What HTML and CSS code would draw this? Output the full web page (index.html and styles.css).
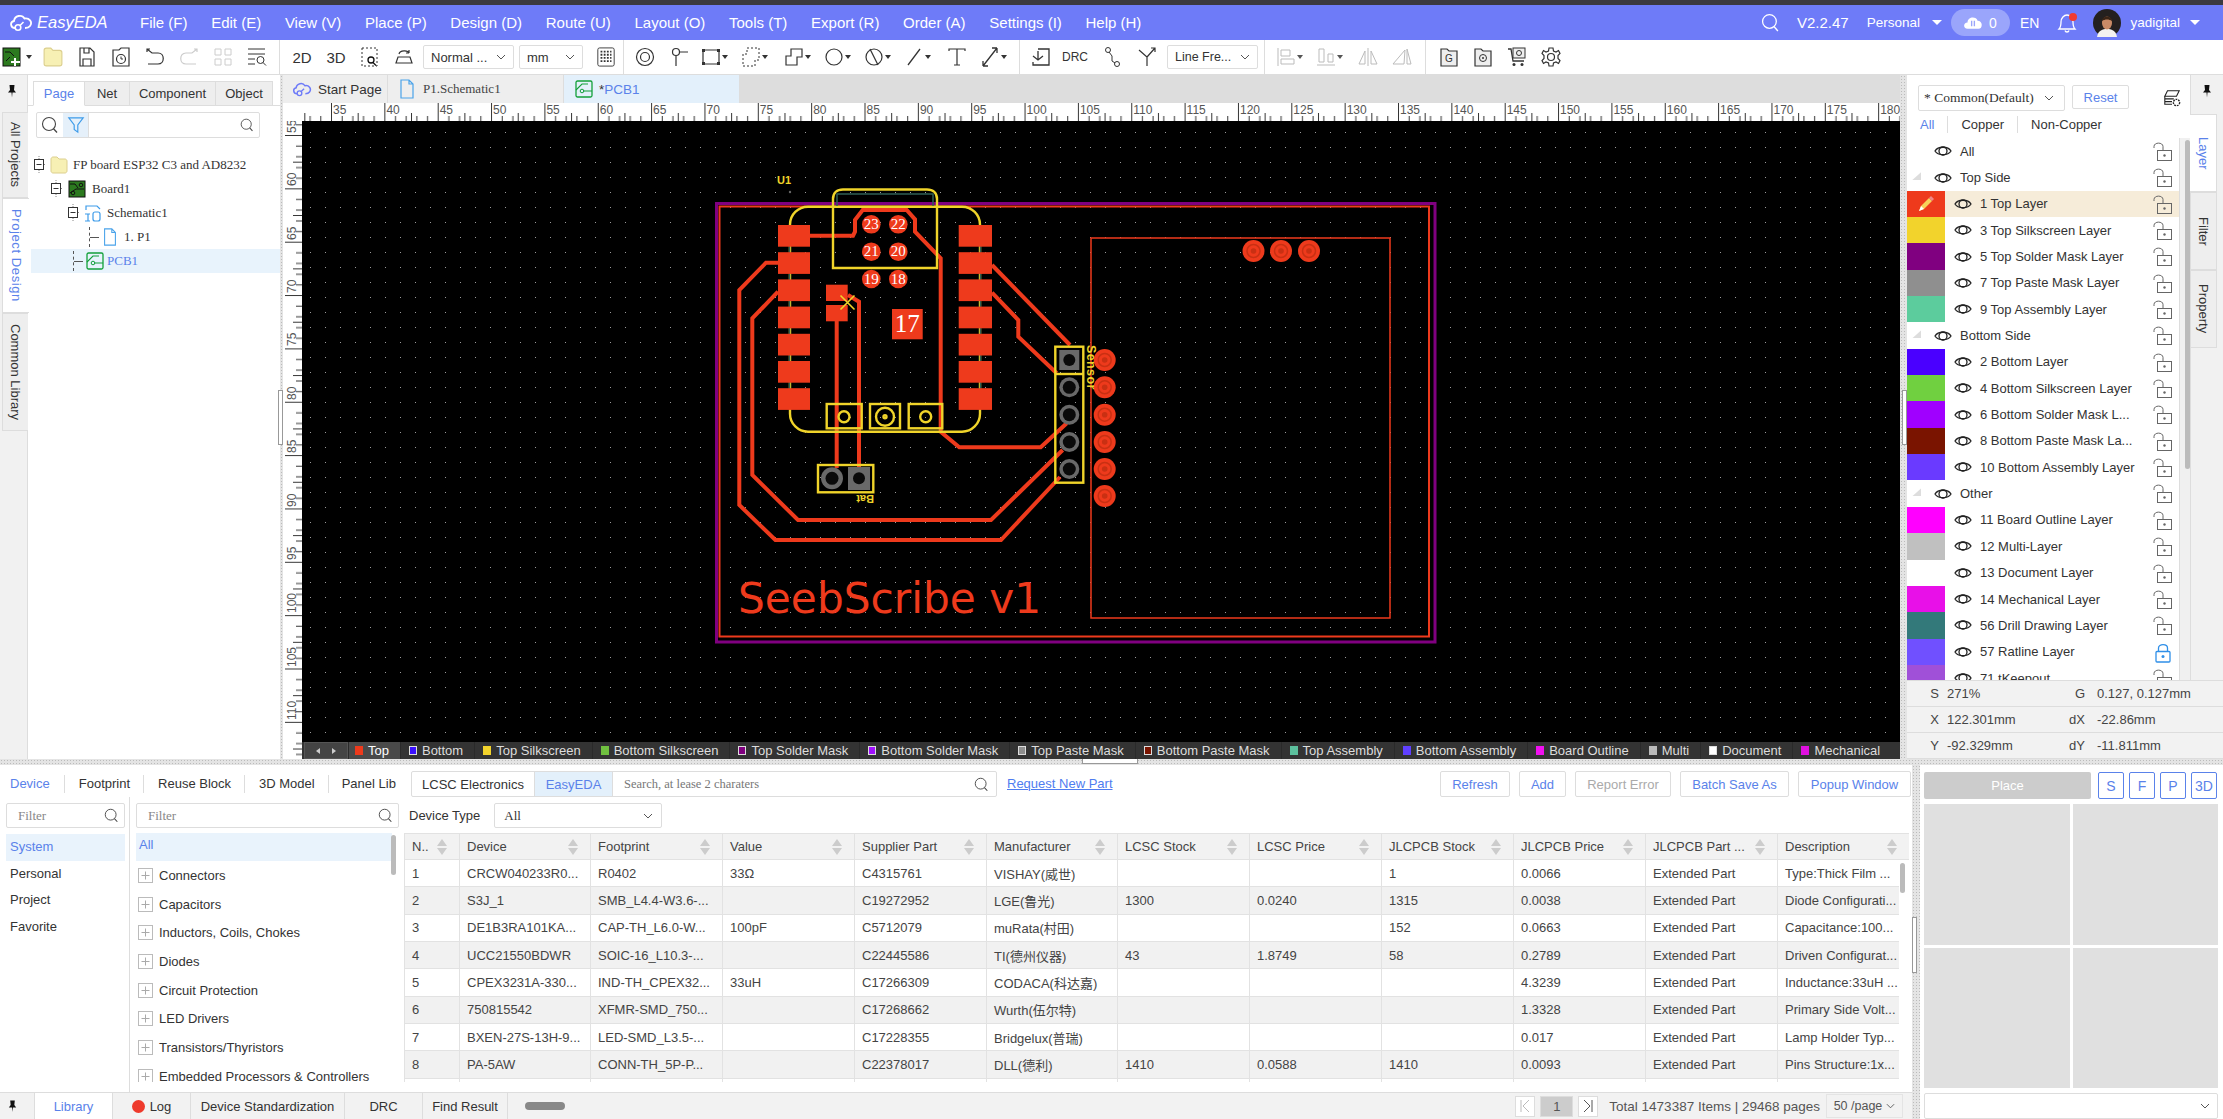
FILE: index.html
```html
<!DOCTYPE html>
<html lang="en">

<head>
    <meta charset="UTF-8" />
    <title>EasyEDA</title>
    <link rel="stylesheet" href="styles.css">
</head>

<body>

    <svg class="defs">
        <symbol id="eye" viewBox="0 0 18 14">
            <path d="M1 7C4 2 14 2 17 7C14 12 4 12 1 7Z" fill="none" stroke="#222" stroke-width="1.3" />
            <circle cx="9" cy="7" r="4" fill="none" stroke="#222" stroke-width="1.3" />
        </symbol>
        <symbol id="lock" viewBox="0 0 20 22">
            <rect x="4.5" y="9.5" width="14" height="10" fill="none" stroke="#666" />
            <path d="M1 7V5.5C1 1 10 1 10 5.5V9" fill="none" stroke="#666" />
            <circle cx="11.5" cy="14.5" r="1.2" fill="#666" />
        </symbol>
        <symbol id="lock-on" viewBox="0 0 20 22">
            <rect x="3" y="9.5" width="14" height="10.5" rx="1" fill="none" stroke="#2f8fe8" stroke-width="1.3" />
            <path d="M5.5 9V6C5.5 1.5 14.5 1.5 14.5 6V9" fill="none" stroke="#2f8fe8" stroke-width="1.3" />
            <circle cx="10" cy="14.5" r="1.5" fill="#2f8fe8" />
        </symbol>
        <symbol id="pin" viewBox="0 0 12 14">
            <path d="M3.5 1H8.5L8 6L10 8.500H2L4 6ZM5.500 8.500H6.500L6 13.500Z" fill="#111" />
        </symbol>
        <symbol id="mag" viewBox="0 0 18 18">
            <circle cx="8" cy="8" r="6.500" fill="none" stroke="#444" stroke-width="1.100" />
            <path d="M12.500 12.800L16 16.500" stroke="#444" stroke-width="1.300" />
        </symbol>
        <symbol id="chev" viewBox="0 0 10 6">
            <path d="M1 1L5 5L9 1" fill="none" stroke="#555" />
        </symbol>
        <symbol id="cloud" viewBox="0 0 24 20">
            <path d="M6 15C1.500 15 0.500 9 5 8C5.500 2.500 13 1 15.500 5.500C20 4.500 24 9 21 13C20 14.500 18 15 16 15" fill="none" stroke="currentColor" stroke-width="1.800" />
            <circle cx="9" cy="14.500" r="2.800" fill="none" stroke="currentColor" stroke-width="1.600" />
            <path d="M11 12.500L14.500 9" stroke="currentColor" stroke-width="1.600" />
        </symbol>
        <symbol id="pcb" viewBox="0 0 18 18">
            <rect x="1" y="1" width="16" height="16" rx="1.500" fill="none" stroke="#13a03a" stroke-width="1.300" />
            <path d="M1 10L7 4H13M8 11H17" fill="none" stroke="#13a03a" stroke-width="1.100" />
            <circle cx="7" cy="11" r="1.800" fill="none" stroke="#13a03a" />
        </symbol>
        <symbol id="sheet" viewBox="0 0 14 20">
            <path d="M1 1H9L13 5V19H1ZM9 1V5H13" fill="none" stroke="#4aa3ea" stroke-width="1.200" />
        </symbol>
        <symbol id="folder" viewBox="0 0 18 18">
            <path d="M1 3C1 2 2 1 3 1H7L9 3H15C16 3 17 4 17 5V15C17 16 16 17 15 17H3C2 17 1 16 1 15Z" fill="#f7f0b4" stroke="#dccf8e" />
        </symbol>
        <symbol id="box-minus" viewBox="0 0 12 18">
            <path d="M6 0V3M6 14V18M11 8.500H12" stroke="#888" stroke-dasharray="1 1" />
            <rect x="1.500" y="3.500" width="9" height="10" fill="#fff" stroke="#333" />
            <path d="M3.500 8.500H8.500" stroke="#333" />
        </symbol>
        <symbol id="plus" viewBox="0 0 15 15">
            <rect x="0.500" y="0.500" width="14" height="14" fill="#fff" stroke="#bbb" />
            <path d="M7.500 3.500V11.500M3.500 7.500H11.500" stroke="#aaa" />
        </symbol>
        <symbol id="sort" viewBox="0 0 12 18">
            <path d="M6 1L11 8H1ZM6 17L1 10H11Z" fill="#ccc" />
        </symbol>
    </svg>

    <div class="strip"></div>

    <header class="topbar">
        <div class="logo">
            <svg class="logo-ico"><use href="#cloud" /></svg>
            <span>EasyEDA</span>
        </div>
        <nav class="menu">
            <span>File (F)</span>
            <span>Edit (E)</span>
            <span>View (V)</span>
            <span>Place (P)</span>
            <span>Design (D)</span>
            <span>Route (U)</span>
            <span>Layout (O)</span>
            <span>Tools (T)</span>
            <span>Export (R)</span>
            <span>Order (A)</span>
            <span>Settings (I)</span>
            <span>Help (H)</span>
        </nav>
        <div class="top-right">
            <svg class="top-search" viewBox="0 0 18 18">
                <circle cx="8" cy="8" r="6.500" fill="none" stroke="#fff" stroke-width="1.200" />
                <path d="M12.500 13L16 17" stroke="#fff" stroke-width="1.300" />
            </svg>
            <span class="version">V2.2.47</span>
            <span class="plan">Personal</span>
            <i class="caret-w plan-caret"></i>
            <div class="cloud-pill">
                <svg viewBox="0 0 22 16">
                    <path d="M5 15C0 15 0 8 5 8C5 1 15 1 16 6C22 6 22 15 17 15Z" fill="#fff" />
                    <path d="M9.500 6V12M12.500 6V12" stroke="#9aa5fb" stroke-width="1.500" />
                </svg>
                <span>0</span>
            </div>
            <span class="lang">EN</span>
            <div class="bell">
                <svg viewBox="0 0 20 22">
                    <path d="M2 17C4 15 4 13 4 10C4 6 7 3 10 3C13 3 16 6 16 10C16 13 16 15 18 17ZM8 18.500C8.500 20.500 11.500 20.500 12 18.500" fill="none" stroke="#fff" stroke-width="1.300" />
                </svg>
                <b></b>
            </div>
            <svg class="avatar" viewBox="0 0 28 28">
                <circle cx="14" cy="14" r="14" fill="#24201f" />
                <path d="M4 28C5 21 10 20 14 20C18 20 23 21 24 28Z" fill="#f4f2f0" />
                <ellipse cx="14" cy="14" rx="5" ry="6.500" fill="#c98a66" />
                <path d="M9 12C9 6 19 6 19 12C16 10 12 10 9 12Z" fill="#3a2416" />
            </svg>
            <span class="user">yadigital</span>
            <i class="caret-w user-caret"></i>
        </div>
    </header>

    <div class="toolbar">
        <div class="tb-c first">
            <svg viewBox="0 0 20 20"><rect x="1" y="1" width="17" height="18" fill="#2c7a1f" stroke="#111" /><path d="M3 5H8L12 9M4 14L8 10" stroke="#111" fill="none" /><path d="M13 11V19M9 15H18" stroke="#fff" stroke-width="2" /></svg>
            <i class="caret"></i>
        </div>
        <div class="tb"><svg viewBox="0 0 20 20"><use href="#folder" /></svg></div>
        <div class="tb"><svg viewBox="0 0 20 20"><path d="M3 1H13L17 5V19H3ZM7 1V6H12V1M6 19V12H14V19" fill="none" stroke="#333" stroke-width="1.200" /></svg></div>
        <div class="tb"><svg viewBox="0 0 20 20"><path d="M2 3H8L10 1H18V19H2Z" fill="none" stroke="#333" stroke-width="1.200" /><circle cx="10" cy="12" r="4.500" fill="none" stroke="#333" stroke-width="1.200" /><path d="M10 9.500V12H12" fill="none" stroke="#333" /></svg></div>
        <div class="tb"><svg viewBox="0 0 20 20"><path d="M5 2H2V5M2 2L7 6H13C20 6 20 17 13 17H3" fill="none" stroke="#333" stroke-width="1.200" /></svg></div>
        <div class="tb"><svg viewBox="0 0 20 20"><path d="M15 2H18V5M18 2L13 6H7C0 6 0 17 7 17H17" fill="none" stroke="#ccc" stroke-width="1.200" /></svg></div>
        <div class="tb"><svg viewBox="0 0 20 20"><path d="M2 2H8V8H2ZM12 2H18V8H12ZM2 12H8V18H2ZM12 12H18V18H12Z" fill="none" stroke="#ccc" /></svg></div>
        <div class="tb"><svg viewBox="0 0 20 20"><path d="M1 2H18M1 7H18M1 12H8M1 17H8" stroke="#333" fill="none" /><circle cx="13.500" cy="13" r="3.500" fill="none" stroke="#333" /><path d="M16 15.500L19 18.500" stroke="#333" /></svg></div>
        <i class="tb-sep sep-a"></i>
        <div class="tb tb-text">2D</div>
        <div class="tb tb-text">3D</div>
        <div class="tb"><svg viewBox="0 0 20 20"><rect x="2" y="1" width="15" height="18" fill="none" stroke="#333" stroke-dasharray="2 2" /><circle cx="11" cy="13" r="3" fill="#fff" stroke="#111" stroke-width="1.300" /><path d="M13 15.500L16 18.500" stroke="#111" stroke-width="1.300" /></svg></div>
        <div class="tb"><svg viewBox="0 0 20 20"><path d="M5 7C6 3 14 3 15 6M15 6V3M15 6H12M2 16H18L16 10H4Z" fill="none" stroke="#333" stroke-width="1.200" /></svg></div>
        <div class="sel sel-normal"><span>Normal ...</span><svg><use href="#chev" /></svg></div>
        <div class="sel sel-unit"><span>mm</span><svg><use href="#chev" /></svg></div>
        <div class="tb tb-grid"><svg viewBox="0 0 20 22"><rect x="1" y="1" width="18" height="20" rx="2" fill="none" stroke="#333" /><path d="M4 5H16M4 8.500H16M4 12H16M4 15.500H16" stroke="#333" stroke-width="2" stroke-dasharray="2 1.500" /></svg></div>
        <i class="tb-sep sep-b"></i>
        <div class="tb"><svg viewBox="0 0 20 20"><circle cx="10" cy="10" r="8.500" fill="none" stroke="#333" stroke-width="1.200" /><circle cx="10" cy="10" r="4.500" fill="none" stroke="#333" stroke-width="1.200" /></svg></div>
        <div class="tb"><svg viewBox="0 0 20 20"><circle cx="7" cy="5" r="3.500" fill="none" stroke="#333" stroke-width="1.200" /><path d="M7 9V19M11 5H19" stroke="#333" stroke-width="1.200" /></svg></div>
        <div class="tb-c"><svg viewBox="0 0 20 20"><rect x="2" y="3" width="16" height="14" rx="1" fill="none" stroke="#333" stroke-width="1.200" /><path d="M1 2H4V5H1ZM16 2H19V5H16ZM1 15H4V18H1ZM16 15H19V18H16Z" fill="#333" /></svg><i class="caret"></i></div>
        <div class="tb-c"><svg viewBox="0 0 20 20"><path d="M6 1H18V13H14V19H2V7H6Z" fill="none" stroke="#333" stroke-dasharray="2 2" /></svg><i class="caret"></i></div>
        <div class="tb-c poly"><svg viewBox="0 0 20 20"><path d="M7 2H18V10H13V18H2V9H7Z" fill="none" stroke="#333" stroke-width="1.200" /></svg><i class="caret"></i></div>
        <div class="tb-c"><svg viewBox="0 0 20 20"><circle cx="10" cy="10" r="8" fill="none" stroke="#333" stroke-width="1.200" /></svg><i class="caret"></i></div>
        <div class="tb-c"><svg viewBox="0 0 20 20"><circle cx="10" cy="10" r="8" fill="none" stroke="#333" stroke-width="1.200" /><path d="M6 2L14 18" stroke="#333" stroke-width="1.200" /></svg><i class="caret"></i></div>
        <div class="tb-c"><svg viewBox="0 0 20 20"><path d="M4 18L16 2" stroke="#333" stroke-width="1.300" /></svg><i class="caret"></i></div>
        <div class="tb tb-t"><svg viewBox="0 0 20 20"><path d="M2 4V2H18V4M10 2V18M7 18H13" fill="none" stroke="#333" stroke-width="1.200" /></svg></div>
        <div class="tb-c"><svg viewBox="0 0 20 20"><path d="M3 19L17 1M3 19V14M3 19H8M17 1V6M17 1H12" fill="none" stroke="#333" stroke-width="1.300" /></svg><i class="caret"></i></div>
        <i class="tb-sep"></i>
        <div class="tb"><svg viewBox="0 0 20 20"><path d="M7 2H18V18H2V15M2 9L7 13L12 9M7 13V4" fill="none" stroke="#333" stroke-width="1.300" /></svg></div>
        <div class="tb tb-text tb-drc">DRC</div>
        <div class="tb tb-node"><svg viewBox="0 0 20 20"><circle cx="5" cy="3" r="2.500" fill="none" stroke="#333" /><circle cx="14" cy="17" r="2.500" fill="none" stroke="#333" /><path d="M6 5L9 9V14L12 16" fill="none" stroke="#333" /></svg></div>
        <div class="tb"><svg viewBox="0 0 20 20"><path d="M2 3L10 10V19M10 10L18 1M14 1H18V5" fill="none" stroke="#333" stroke-width="1.200" /></svg></div>
        <div class="sel sel-line"><span>Line Fre...</span><svg><use href="#chev" /></svg></div>
        <i class="tb-sep sep-c"></i>
        <div class="tb-c dim"><svg viewBox="0 0 20 20"><path d="M2 1V19M5 3H14V9H5ZM5 12H18V17H5Z" fill="none" stroke="#bbb" /></svg><i class="caret"></i></div>
        <div class="tb-c dim"><svg viewBox="0 0 20 20"><path d="M1 18H19M3 2H8V15H3ZM12 7H17V15H12Z" fill="none" stroke="#bbb" /></svg><i class="caret"></i></div>
        <div class="tb dim"><svg viewBox="0 0 20 20"><path d="M10 1V19M7 4L1 17H7ZM13 4L19 17H13Z" fill="none" stroke="#bbb" /></svg></div>
        <div class="tb dim"><svg viewBox="0 0 20 20"><path d="M13 3L1 17H12ZM15 2L19 17H15Z" fill="none" stroke="#bbb" /></svg></div>
        <i class="tb-sep sep-c"></i>
        <div class="tb"><svg viewBox="0 0 20 20"><path d="M2 2H8L10 4H18V19H2Z" fill="#eee" stroke="#333" stroke-width="1.200" /><text x="10" y="15" class="ico-letter">G</text></svg></div>
        <div class="tb"><svg viewBox="0 0 20 20"><path d="M2 2H8L10 4H18V19H2Z" fill="#eee" stroke="#333" stroke-width="1.200" /><circle cx="10" cy="11" r="3.500" fill="none" stroke="#333" /><circle cx="10" cy="11" r="1" fill="#333" /></svg></div>
        <div class="tb"><svg viewBox="0 0 20 20"><path d="M1 2H4L6 14H17" fill="none" stroke="#333" stroke-width="1.300" /><rect x="6" y="1" width="12" height="10" fill="#eee" stroke="#333" /><circle cx="12" cy="6" r="2.500" fill="none" stroke="#333" /><circle cx="7" cy="17.500" r="1.500" fill="#333" /><circle cx="15" cy="17.500" r="1.500" fill="#333" /></svg></div>
        <div class="tb"><svg viewBox="0 0 20 20"><path d="M8 1H12L12.500 4L15 5L17.500 3.500L19 6.500L17 8.500V11.500L19 13.500L17.500 16.500L15 15L12.500 16L12 19H8L7.500 16L5 15L2.500 16.500L1 13.500L3 11.500V8.500L1 6.500L2.500 3.500L5 5L7.500 4Z" fill="none" stroke="#333" stroke-width="1.200" /><circle cx="10" cy="10" r="3.500" fill="none" stroke="#333" stroke-width="1.200" /></svg></div>
    </div>

    <div class="workspace">
        <aside class="rail">
            <svg class="pin pin-rail"><use href="#pin" /></svg>
            <div class="rail-tab rt-all">All Projects</div>
            <div class="rail-tab rt-design on">Project Design</div>
            <div class="rail-tab rt-common">Common Library</div>
        </aside>

        <section class="left-panel">
            <div class="panel-tabs">
                <span class="pt-page on">Page</span>
                <span class="pt-net">Net</span>
                <span class="pt-comp">Component</span>
                <span class="pt-obj">Object</span>
            </div>
            <div class="tree-search">
                <span class="ts-cell"><svg><use href="#mag" /></svg></span>
                <span class="ts-cell ts-filter">
                    <svg viewBox="0 0 18 20"><path d="M1 2H17L11 10V18L7 15V10Z" fill="none" stroke="#3d9be9" stroke-width="1.300" /></svg>
                </span>
                <span class="ts-input"><svg><use href="#mag" /></svg></span>
            </div>
            <ul class="tree">
                <li class="lv1">
                    <svg class="exp"><use href="#box-minus" /></svg>
                    <svg class="t-ico"><use href="#folder" /></svg>
                    <span>FP board ESP32 C3 and AD8232</span>
                </li>
                <li class="lv2">
                    <svg class="exp"><use href="#box-minus" /></svg>
                    <svg class="t-ico" viewBox="0 0 18 18"><rect x="1" y="1" width="16" height="16" fill="#2c7a1f" stroke="#111" /><path d="M2 4L7 4L10 8M2 13L8 9H16" fill="none" stroke="#111" /><circle cx="13" cy="5" r="1.800" fill="none" stroke="#111" /><circle cx="5" cy="13" r="1.800" fill="none" stroke="#111" /></svg>
                    <span>Board1</span>
                </li>
                <li class="lv3">
                    <svg class="exp"><use href="#box-minus" /></svg>
                    <svg class="t-ico" viewBox="0 0 18 18"><path d="M2 6V2H13L16 5M1 10H6M4 10V17M1 17H6" fill="none" stroke="#3d9be9" stroke-width="1.200" /><rect x="9" y="8" width="7" height="9" rx="2" fill="none" stroke="#3d9be9" stroke-width="1.200" /></svg>
                    <span>Schematic1</span>
                </li>
                <li class="lv4">
                    <i class="conn"></i>
                    <svg class="t-ico sheet-ico"><use href="#sheet" /></svg>
                    <span>1. P1</span>
                </li>
                <li class="lv5 on">
                    <i class="conn"></i>
                    <svg class="t-ico"><use href="#pcb" /></svg>
                    <span>PCB1</span>
                </li>
            </ul>
        </section>

        <i class="split-v"></i>

        <section class="center">
            <div class="doc-tabs">
                <div class="doc-tab dt-start">
                    <svg class="dt-cloud"><use href="#cloud" /></svg>
                    <span>Start Page</span>
                </div>
                <div class="doc-tab dt-sch">
                    <svg class="dt-sheet"><use href="#sheet" /></svg>
                    <span class="serif">P1.Schematic1</span>
                </div>
                <div class="doc-tab dt-pcb">
                    <svg class="dt-pcb-ico"><use href="#pcb" /></svg>
                    <span>*<em>PCB1</em></span>
                </div>
            </div>

            <svg class="ruler-h" viewBox="283 103 1617 18">
                <defs>
                    <pattern id="ticks-h" patternUnits="userSpaceOnUse" x="331" y="103" width="53.35" height="18">
                        <path d="M0.500 0V18M11.170 13V18M21.840 13V18M27.180 10V18M32.510 13V18M43.180 13V18" stroke="#333" />
                    </pattern>
                </defs>
                <rect x="302" y="103" width="1598" height="18" fill="url(#ticks-h)" />
                <g class="ruler-num">
                    <text x="333" y="114">35</text><text x="386.400" y="114">40</text><text x="439.700" y="114">45</text><text x="493" y="114">50</text>
                    <text x="546.400" y="114">55</text><text x="599.800" y="114">60</text><text x="653.100" y="114">65</text><text x="706.500" y="114">70</text>
                    <text x="759.800" y="114">75</text><text x="813.200" y="114">80</text><text x="866.500" y="114">85</text><text x="919.900" y="114">90</text>
                    <text x="973.200" y="114">95</text><text x="1026.600" y="114">100</text><text x="1079.900" y="114">105</text><text x="1133.300" y="114">110</text>
                    <text x="1186.600" y="114">115</text><text x="1240" y="114">120</text><text x="1293.300" y="114">125</text><text x="1346.700" y="114">130</text>
                    <text x="1400" y="114">135</text><text x="1453.400" y="114">140</text><text x="1506.700" y="114">145</text><text x="1560" y="114">150</text>
                    <text x="1613.400" y="114">155</text><text x="1666.800" y="114">160</text><text x="1720.100" y="114">165</text><text x="1773.500" y="114">170</text>
                    <text x="1826.800" y="114">175</text><text x="1880.200" y="114">180</text>
                </g>
            </svg>

            <div class="stage">
                <svg class="ruler-v" viewBox="283 121 19 638">
                    <defs>
                        <pattern id="ticks-v" patternUnits="userSpaceOnUse" x="283" y="135" width="19" height="53.35">
                            <path d="M2 0.500H19M13 11.170H19M13 21.840H19M10 27.180H19M13 32.510H19M13 43.180H19" stroke="#333" />
                        </pattern>
                    </defs>
                    <rect x="283" y="121" width="19" height="638" fill="url(#ticks-v)" />
                    <g class="ruler-num">
                        <text transform="translate(296 133) rotate(-90)">55</text>
                        <text transform="translate(296 186) rotate(-90)">60</text>
                        <text transform="translate(296 240) rotate(-90)">65</text>
                        <text transform="translate(296 293) rotate(-90)">70</text>
                        <text transform="translate(296 346) rotate(-90)">75</text>
                        <text transform="translate(296 400) rotate(-90)">80</text>
                        <text transform="translate(296 453) rotate(-90)">85</text>
                        <text transform="translate(296 507) rotate(-90)">90</text>
                        <text transform="translate(296 560) rotate(-90)">95</text>
                        <text transform="translate(296 613) rotate(-90)">100</text>
                        <text transform="translate(296 667) rotate(-90)">105</text>
                        <text transform="translate(296 720) rotate(-90)">110</text>
                    </g>
                </svg>

                <div class="stage-main">
                    <svg class="board" viewBox="302 121 1598 621">
                        <defs>
                            <pattern id="dots" patternUnits="userSpaceOnUse" x="0" y="12" width="15" height="15">
                                <rect x="10" y="0" width="1" height="1" fill="#9a9a9a" />
                            </pattern>
                            <g id="hole">
                                <circle r="11" fill="#ee3a1c" />
                                <circle r="6.500" fill="none" stroke="#c93013" stroke-width="1.500" />
                                <circle r="2.800" fill="#c93013" />
                            </g>
                        </defs>
                        <rect x="302" y="121" width="1598" height="621" fill="#000" />
                        <rect x="302" y="121" width="1598" height="621" fill="url(#dots)" />

                        <rect class="b-purple" x="716.500" y="203.500" width="718.500" height="438.500" />
                        <rect class="b-red" x="719.500" y="206.500" width="709.500" height="430" />
                        <rect class="b-red thin" x="1091" y="238" width="299" height="380" />

                        <g class="trace">
                            <polyline points="810,235.700 853,235.700 855,231.700 855,220 862.700,210 906.700,210 915,219.300 915,231.700 940.700,258.300 940.700,431.700 959.300,447.300 1040.700,447.300 1066.700,423.300" />
                            <polyline points="778,262.700 766,262.700 739.300,290 739.300,505 775.400,540 1001,540 1060,477" />
                            <polyline points="778,291.700 752.300,318.300 752.300,475 798,520 991,520 1062.700,450" />
                            <polyline points="992,265 1070,345" />
                            <polyline points="992,292.700 1018.300,320 1018.300,336.700 1056.700,373.300" />
                            <polyline points="836.700,321 836.700,468" />
                            <polyline points="848,295 859,301.700 859,468" />
                        </g>

                        <rect class="b-yellow" x="790" y="206.700" width="190" height="225" rx="18" />
                        <path class="b-yellow" d="M833 268V199C833 193 837 189.500 843 189.500H927C933 189.500 937 193 937 199V268Z" />
                        <path class="b-teal" d="M789.500 228V406M980.500 228V406M837 206V194H933V206" />

                        <g class="pad">
                            <rect x="778" y="225" width="32" height="21.700" /><rect x="778" y="252.200" width="32" height="21.700" />
                            <rect x="778" y="279.400" width="32" height="21.700" /><rect x="778" y="306.600" width="32" height="21.700" />
                            <rect x="778" y="333.800" width="32" height="21.700" /><rect x="778" y="361" width="32" height="21.700" />
                            <rect x="778" y="388.200" width="32" height="21.700" />
                            <rect x="958.700" y="225" width="33.300" height="21.700" /><rect x="958.700" y="252.200" width="33.300" height="21.700" />
                            <rect x="958.700" y="279.400" width="33.300" height="21.700" /><rect x="958.700" y="306.600" width="33.300" height="21.700" />
                            <rect x="958.700" y="333.800" width="33.300" height="21.700" /><rect x="958.700" y="361" width="33.300" height="21.700" />
                            <rect x="958.700" y="388.200" width="33.300" height="21.700" />
                            <rect x="826" y="284.700" width="21.700" height="16.300" /><rect x="826" y="305" width="21.700" height="16.300" />
                            <rect x="892" y="309" width="30.700" height="30.300" />
                            <circle cx="871.300" cy="224.300" r="9.300" /><circle cx="898.300" cy="224.300" r="9.300" />
                            <circle cx="871.300" cy="251.700" r="9.300" /><circle cx="898.300" cy="251.700" r="9.300" />
                            <circle cx="871.300" cy="279" r="9.300" /><circle cx="898.300" cy="279" r="9.300" />
                        </g>
                        <g class="pad-num">
                            <text x="871.300" y="229">23</text><text x="898.300" y="229">22</text>
                            <text x="871.300" y="256.400">21</text><text x="898.300" y="256.400">20</text>
                            <text x="871.300" y="283.700">19</text><text x="898.300" y="283.700">18</text>
                            <text x="907.300" y="332" class="big">17</text>
                        </g>

                        <path class="x-mark" d="M840.500 295.500L854.500 309.500M854.500 295.500L840.500 309.500" />

                        <g class="b-yellow">
                            <rect x="826.700" y="404" width="35" height="24.300" />
                            <rect x="870" y="404" width="30" height="24.300" />
                            <rect x="908.700" y="404" width="33.600" height="24.300" />
                            <circle cx="844" cy="416.700" r="5.500" />
                            <circle cx="885" cy="416.700" r="9" />
                            <circle cx="885" cy="416.700" r="1.500" />
                            <circle cx="925.700" cy="416.700" r="5.500" />
                            <rect x="818" y="465" width="55.300" height="27.300" />
                            <rect x="1055.300" y="346.700" width="28" height="136" />
                            <path d="M1055.300 374H1083.300" />
                        </g>

                        <g class="drill">
                            <rect x="848" y="467" width="22" height="23" class="gray" />
                            <circle cx="832" cy="478.300" r="11" class="gray" />
                            <circle cx="832" cy="478.300" r="6.500" />
                            <circle cx="859" cy="478.300" r="6" />
                            <rect x="1059.300" y="350" width="20" height="20" class="gray" />
                            <circle cx="1069.300" cy="360" r="6" />
                            <circle cx="1069.300" cy="387.300" r="10" class="gray" /><circle cx="1069.300" cy="387.300" r="6.500" />
                            <circle cx="1069.300" cy="414.700" r="10" class="gray" /><circle cx="1069.300" cy="414.700" r="6.500" />
                            <circle cx="1069.300" cy="442" r="10" class="gray" /><circle cx="1069.300" cy="442" r="6.500" />
                            <circle cx="1069.300" cy="469" r="10" class="gray" /><circle cx="1069.300" cy="469" r="6.500" />
                        </g>

                        <use href="#hole" x="1104.700" y="360" /><use href="#hole" x="1104.700" y="387.300" />
                        <use href="#hole" x="1104.700" y="414.700" /><use href="#hole" x="1104.700" y="442" />
                        <use href="#hole" x="1104.700" y="469" /><use href="#hole" x="1104.700" y="496" />
                        <use href="#hole" x="1253.500" y="251" /><use href="#hole" x="1281" y="251" />
                        <use href="#hole" x="1309" y="251" />

                        <text class="silk" x="777" y="184">U1</text>
                        <circle cx="790" cy="192" r="1.200" fill="#666" />
                        <text class="silk" transform="translate(874 495) rotate(180)">Bat</text>
                        <text class="silk sensor" transform="translate(1087 345) rotate(90)">Sensor</text>
                        <text class="seeb" x="738" y="613">SeebScribe v1</text>
                    </svg>

                    <div class="layer-tabs">
                        <div class="lt-nav"><i class="lt-l"></i><i class="lt-r"></i></div>
                        <span class="on"><i class="s-top"></i>Top</span>
                        <span><i class="s-bot"></i>Bottom</span>
                        <span><i class="s-tsilk"></i>Top Silkscreen</span>
                        <span><i class="s-bsilk"></i>Bottom Silkscreen</span>
                        <span><i class="s-tsold"></i>Top Solder Mask</span>
                        <span><i class="s-bsold"></i>Bottom Solder Mask</span>
                        <span><i class="s-tpaste"></i>Top Paste Mask</span>
                        <span><i class="s-bpaste"></i>Bottom Paste Mask</span>
                        <span><i class="s-tasm"></i>Top Assembly</span>
                        <span><i class="s-basm"></i>Bottom Assembly</span>
                        <span><i class="s-outline"></i>Board Outline</span>
                        <span><i class="s-multi"></i>Multi</span>
                        <span><i class="s-doc"></i>Document</span>
                        <span><i class="s-mech"></i>Mechanical</span>
                    </div>
                </div>
            </div>
        </section>

        <i class="split-v split-r"></i>

        <section class="right-panel">
            <div class="rp-top">
                <div class="sel sel-preset"><span class="serif">* Common(Default)</span><svg><use href="#chev" /></svg></div>
                <button class="btn reset">Reset</button>
                <svg class="stack-ico" viewBox="0 0 20 20"><path d="M5 2H18L15 8H2ZM2 8V11H12M2 11V14H10M2 14V17H10" fill="none" stroke="#222" stroke-width="1.200" /><circle cx="15" cy="15" r="3.500" fill="none" stroke="#222" stroke-width="1.500" stroke-dasharray="2 1" /></svg>
            </div>
            <div class="rp-filter">
                <span class="on">All</span><span>Copper</span><span>Non-Copper</span>
            </div>
            <div class="layers">
                <ul>
                    <li class="grp"><svg class="eye"><use href="#eye" /></svg><span>All</span><svg class="lk"><use href="#lock" /></svg></li>
                    <li class="grp"><i class="tri"></i><svg class="eye"><use href="#eye" /></svg><span>Top Side</span><svg class="lk"><use href="#lock" /></svg></li>
                    <li class="cur"><i class="sw c1"><svg viewBox="0 0 18 18"><path d="M2 16L4 11L12 3L15 6L7 14Z" fill="#f7d25a" /><path d="M2 16L4 11L7 14Z" fill="#fff" /><path d="M12 3L14 1L17 4L15 6Z" fill="#e88" /></svg></i><svg class="eye"><use href="#eye" /></svg><span>1 Top Layer</span><svg class="lk"><use href="#lock" /></svg></li>
                    <li><i class="sw c3"></i><svg class="eye"><use href="#eye" /></svg><span>3 Top Silkscreen Layer</span><svg class="lk"><use href="#lock" /></svg></li>
                    <li><i class="sw c5"></i><svg class="eye"><use href="#eye" /></svg><span>5 Top Solder Mask Layer</span><svg class="lk"><use href="#lock" /></svg></li>
                    <li><i class="sw c7"></i><svg class="eye"><use href="#eye" /></svg><span>7 Top Paste Mask Layer</span><svg class="lk"><use href="#lock" /></svg></li>
                    <li><i class="sw c9"></i><svg class="eye"><use href="#eye" /></svg><span>9 Top Assembly Layer</span><svg class="lk"><use href="#lock" /></svg></li>
                    <li class="grp"><i class="tri"></i><svg class="eye"><use href="#eye" /></svg><span>Bottom Side</span><svg class="lk"><use href="#lock" /></svg></li>
                    <li><i class="sw c2"></i><svg class="eye"><use href="#eye" /></svg><span>2 Bottom Layer</span><svg class="lk"><use href="#lock" /></svg></li>
                    <li><i class="sw c4"></i><svg class="eye"><use href="#eye" /></svg><span>4 Bottom Silkscreen Layer</span><svg class="lk"><use href="#lock" /></svg></li>
                    <li><i class="sw c6"></i><svg class="eye"><use href="#eye" /></svg><span>6 Bottom Solder Mask L...</span><svg class="lk"><use href="#lock" /></svg></li>
                    <li><i class="sw c8"></i><svg class="eye"><use href="#eye" /></svg><span>8 Bottom Paste Mask La...</span><svg class="lk"><use href="#lock" /></svg></li>
                    <li><i class="sw c10"></i><svg class="eye"><use href="#eye" /></svg><span>10 Bottom Assembly Layer</span><svg class="lk"><use href="#lock" /></svg></li>
                    <li class="grp"><i class="tri"></i><svg class="eye"><use href="#eye" /></svg><span>Other</span><svg class="lk"><use href="#lock" /></svg></li>
                    <li><i class="sw c11"></i><svg class="eye"><use href="#eye" /></svg><span>11 Board Outline Layer</span><svg class="lk"><use href="#lock" /></svg></li>
                    <li><i class="sw c12"></i><svg class="eye"><use href="#eye" /></svg><span>12 Multi-Layer</span><svg class="lk"><use href="#lock" /></svg></li>
                    <li><i class="sw c13"></i><svg class="eye"><use href="#eye" /></svg><span>13 Document Layer</span><svg class="lk"><use href="#lock" /></svg></li>
                    <li><i class="sw c14"></i><svg class="eye"><use href="#eye" /></svg><span>14 Mechanical Layer</span><svg class="lk"><use href="#lock" /></svg></li>
                    <li><i class="sw c56"></i><svg class="eye"><use href="#eye" /></svg><span>56 Drill Drawing Layer</span><svg class="lk"><use href="#lock" /></svg></li>
                    <li><i class="sw c57"></i><svg class="eye"><use href="#eye" /></svg><span>57 Ratline Layer</span><svg class="lk"><use href="#lock-on" /></svg></li>
                    <li><i class="sw c71"></i><svg class="eye"><use href="#eye" /></svg><span>71 tKeepout</span><svg class="lk"><use href="#lock" /></svg></li>
                </ul>
                <div class="layers-track"><i></i></div>
            </div>
            <div class="coords">
                <div><b>S</b><span>271%</span><b>G</b><span>0.127, 0.127mm</span></div>
                <div><b>X</b><span>122.301mm</span><b>dX</b><span>-22.86mm</span></div>
                <div><b>Y</b><span>-92.329mm</span><b>dY</b><span>-11.811mm</span></div>
            </div>
        </section>

        <aside class="rail-r">
            <svg class="pin pin-rail-r"><use href="#pin" /></svg>
            <div class="rr-tab on">Layer</div>
            <div class="rr-tab">Filter</div>
            <div class="rr-tab">Property</div>
        </aside>

        <i class="grip grip-l"></i>
        <i class="grip grip-r"></i>
    </div>

    <div class="split-h"><i class="grip-h"></i></div>

    <div class="lower">
        <section class="lib">
            <div class="lib-top">
                <div class="lib-tabs">
                    <span class="on lt-device">Device</span>
                    <span class="lt-foot">Footprint</span>
                    <span class="lt-reuse">Reuse Block</span>
                    <span class="lt-3d">3D Model</span>
                    <span class="lt-panel">Panel Lib</span>
                </div>
                <div class="src-group">
                    <span class="src-lcsc">LCSC Electronics</span>
                    <span class="src-eda">EasyEDA</span>
                    <span class="src-search"><em>Search, at lease 2 charaters</em><svg><use href="#mag" /></svg></span>
                </div>
                <a class="req-link" href="#">Request New Part</a>
                <div class="lib-actions">
                    <button class="btn act-refresh">Refresh</button>
                    <button class="btn act-add">Add</button>
                    <button class="btn act-report">Report Error</button>
                    <button class="btn act-batch">Batch Save As</button>
                    <button class="btn act-popup">Popup Window</button>
                </div>
            </div>

            <div class="lib-body">
                <div class="lib-source">
                    <div class="filter-input"><em>Filter</em><svg><use href="#mag" /></svg></div>
                    <ul>
                        <li class="on">System</li>
                        <li>Personal</li>
                        <li>Project</li>
                        <li>Favorite</li>
                    </ul>
                </div>
                <div class="lib-cats">
                    <div class="filter-input"><em>Filter</em><svg><use href="#mag" /></svg></div>
                    <div class="cat-all">All</div>
                    <ul>
                        <li><svg><use href="#plus" /></svg>Connectors</li>
                        <li><svg><use href="#plus" /></svg>Capacitors</li>
                        <li><svg><use href="#plus" /></svg>Inductors, Coils, Chokes</li>
                        <li><svg><use href="#plus" /></svg>Diodes</li>
                        <li><svg><use href="#plus" /></svg>Circuit Protection</li>
                        <li><svg><use href="#plus" /></svg>LED Drivers</li>
                        <li><svg><use href="#plus" /></svg>Transistors/Thyristors</li>
                        <li><svg><use href="#plus" /></svg>Embedded Processors &amp; Controllers</li>
                    </ul>
                    <i class="cat-thumb"></i>
                </div>
                <div class="lib-table">
                    <div class="type-row">
                        <span>Device Type</span>
                        <div class="sel sel-type"><span class="serif">All</span><svg><use href="#chev" /></svg></div>
                    </div>
                    <div class="table-wrap">
                        <table>
                            <colgroup>
                                <col class="c-n"><col class="c-a"><col><col><col><col class="c-a"><col><col><col><col><col><col>
                            </colgroup>
                            <thead>
                                <tr>
                                    <th>N..<svg><use href="#sort" /></svg></th>
                                    <th>Device<svg><use href="#sort" /></svg></th>
                                    <th>Footprint<svg><use href="#sort" /></svg></th>
                                    <th>Value<svg><use href="#sort" /></svg></th>
                                    <th>Supplier Part<svg><use href="#sort" /></svg></th>
                                    <th>Manufacturer<svg><use href="#sort" /></svg></th>
                                    <th>LCSC Stock<svg><use href="#sort" /></svg></th>
                                    <th>LCSC Price<svg><use href="#sort" /></svg></th>
                                    <th>JLCPCB Stock<svg><use href="#sort" /></svg></th>
                                    <th>JLCPCB Price<svg><use href="#sort" /></svg></th>
                                    <th>JLCPCB Part ...<svg><use href="#sort" /></svg></th>
                                    <th>Description<svg><use href="#sort" /></svg></th>
                                </tr>
                            </thead>
                            <tbody>
                                <tr><td>1</td><td>CRCW040233R0...</td><td>R0402</td><td>33Ω</td><td>C4315761</td><td>VISHAY(威世)</td><td></td><td></td><td>1</td><td>0.0066</td><td>Extended Part</td><td>Type:Thick Film ...</td></tr>
                                <tr><td>2</td><td>S3J_1</td><td>SMB_L4.4-W3.6-...</td><td></td><td>C19272952</td><td>LGE(鲁光)</td><td>1300</td><td>0.0240</td><td>1315</td><td>0.0038</td><td>Extended Part</td><td>Diode Configurati...</td></tr>
                                <tr><td>3</td><td>DE1B3RA101KA...</td><td>CAP-TH_L6.0-W...</td><td>100pF</td><td>C5712079</td><td>muRata(村田)</td><td></td><td></td><td>152</td><td>0.0663</td><td>Extended Part</td><td>Capacitance:100...</td></tr>
                                <tr><td>4</td><td>UCC21550BDWR</td><td>SOIC-16_L10.3-...</td><td></td><td>C22445586</td><td>TI(德州仪器)</td><td>43</td><td>1.8749</td><td>58</td><td>0.2789</td><td>Extended Part</td><td>Driven Configurat...</td></tr>
                                <tr><td>5</td><td>CPEX3231A-330...</td><td>IND-TH_CPEX32...</td><td>33uH</td><td>C17266309</td><td>CODACA(科达嘉)</td><td></td><td></td><td></td><td>4.3239</td><td>Extended Part</td><td>Inductance:33uH ...</td></tr>
                                <tr><td>6</td><td>750815542</td><td>XFMR-SMD_750...</td><td></td><td>C17268662</td><td>Wurth(伍尔特)</td><td></td><td></td><td></td><td>1.3328</td><td>Extended Part</td><td>Primary Side Volt...</td></tr>
                                <tr><td>7</td><td>BXEN-27S-13H-9...</td><td>LED-SMD_L3.5-...</td><td></td><td>C17228355</td><td>Bridgelux(普瑞)</td><td></td><td></td><td></td><td>0.017</td><td>Extended Part</td><td>Lamp Holder Typ...</td></tr>
                                <tr><td>8</td><td>PA-5AW</td><td>CONN-TH_5P-P...</td><td></td><td>C22378017</td><td>DLL(德利)</td><td>1410</td><td>0.0588</td><td>1410</td><td>0.0093</td><td>Extended Part</td><td>Pins Structure:1x...</td></tr>
                                <tr class="blank"><td></td><td></td><td></td><td></td><td></td><td></td><td></td><td></td><td></td><td></td><td></td><td></td></tr>
                            </tbody>
                        </table>
                        <div class="table-track"><i></i></div>
                    </div>
                </div>
            </div>

            <div class="lib-foot">
                <svg class="pin pin-foot"><use href="#pin" /></svg>
                <span class="ft ft-lib on">Library</span>
                <span class="ft ft-log"><i></i>Log</span>
                <span class="ft ft-std">Device Standardization</span>
                <span class="ft ft-drc">DRC</span>
                <span class="ft ft-find">Find Result</span>
                <i class="foot-thumb"></i>
                <div class="pager">
                    <span class="pg"><svg viewBox="0 0 12 16"><path d="M2 2V14M10 2L4 8L10 14" fill="none" stroke="#bbb" /></svg></span>
                    <span class="pg cur">1</span>
                    <span class="pg"><svg viewBox="0 0 12 16"><path d="M10 2V14M2 2L8 8L2 14" fill="none" stroke="#555" /></svg></span>
                    <span class="total">Total 1473387 Items | 29468 pages</span>
                    <span class="per">50 /page<svg><use href="#chev" /></svg></span>
                </div>
            </div>
        </section>

        <div class="lower-split"><i></i></div>

        <section class="preview">
            <div class="pv-top">
                <button class="place">Place</button>
                <button class="btn pv">S</button>
                <button class="btn pv">F</button>
                <button class="btn pv">P</button>
                <button class="btn pv">3D</button>
            </div>
            <div class="pv-grid"><i></i><i></i><i></i><i></i></div>
            <div class="sel sel-pv"><span></span><svg><use href="#chev" /></svg></div>
        </section>
    </div>

</body>

</html>
```

FILE: styles.css
```css
* {
    box-sizing: border-box;
}

html,
body {
    margin: 0;
    width: 2223px;
    height: 1119px;
    overflow: hidden;
}

body {
    font-family: 'Liberation Sans', 'Noto Sans CJK SC', sans-serif;
    font-size: 13px;
    color: #333;
    background: #fff;
}

ul {
    list-style: none;
    margin: 0;
    padding: 0;
}

i,
em {
    font-style: normal;
}

button {
    font-family: inherit;
    font-size: 13px;
    background: #fff;
}

.defs {
    position: absolute;
    width: 0;
    height: 0;
}

.serif {
    font-family: 'Liberation Serif', 'Noto Sans CJK SC', serif;
}

.strip {
    height: 5px;
    background: #3b3940;
}

/* --- header --- */
.topbar {
    height: 35px;
    background: #6e7bf8;
    color: #fff;
    display: flex;
    align-items: center;
}

.logo {
    width: 140px;
    padding-left: 9px;
    display: flex;
    align-items: center;
    gap: 4px;
    font-size: 16.5px;
    font-style: italic;
}

.logo-ico {
    width: 24px;
    height: 20px;
    color: #fff;
}

.menu {
    display: flex;
    gap: 23.7px;
    font-size: 15px;
}

.top-right {
    margin-left: auto;
    display: flex;
    align-items: center;
    padding-right: 23px;
}

.top-search {
    width: 19px;
    height: 19px;
    margin-right: 17px;
}

.version {
    font-size: 15px;
    margin-right: 18px;
}

.plan {
    font-size: 13.5px;
}

.caret-w {
    width: 0;
    height: 0;
    border-left: 5px solid transparent;
    border-right: 5px solid transparent;
    border-top: 5px solid #fff;
    margin-left: 12px;
}

.plan-caret {
    margin-right: 9px;
}

.user-caret {
    margin-left: 10px;
}

.cloud-pill {
    width: 59px;
    height: 27px;
    border-radius: 14px;
    background: #9aa5fb;
    display: flex;
    align-items: center;
    padding-left: 12px;
    gap: 6px;
    font-size: 14px;
}

.cloud-pill svg {
    width: 20px;
    height: 15px;
}

.lang {
    font-size: 14px;
    margin-left: 10px;
}

.bell {
    position: relative;
    width: 20px;
    height: 22px;
    margin-left: 18px;
}

.bell svg {
    width: 20px;
    height: 22px;
}

.bell b {
    position: absolute;
    top: 1px;
    right: 0;
    width: 8px;
    height: 8px;
    border-radius: 50%;
    background: #f03a30;
}

.avatar {
    width: 28px;
    height: 28px;
    margin-left: 16px;
}

.user {
    font-size: 13.5px;
    margin-left: 9px;
}

/* --- toolbar --- */
.toolbar {
    height: 35px;
    display: flex;
    align-items: center;
    border-bottom: 1px solid #ddd;
    background: #fff;
}

.tb {
    width: 34px;
    height: 34px;
    flex: none;
    display: flex;
    align-items: center;
    justify-content: center;
}

.tb svg {
    width: 20px;
    height: 20px;
}

.tb-text {
    font-size: 15px;
    color: #333;
}

.tb-drc {
    font-size: 12px;
    width: 34px;
}

.tb-node {
    margin-left: 4px;
}

.tb-c {
    width: 40px;
    height: 34px;
    flex: none;
    padding-left: 5px;
    display: flex;
    align-items: center;
    gap: 1px;
}

.tb-c svg {
    width: 20px;
    height: 20px;
    flex: none;
}

.tb-c.first {
    width: 36px;
    padding-left: 2px;
    gap: 4px;
}

.poly {
    margin-left: 3px;
}

.caret {
    width: 0;
    height: 0;
    border-left: 3.5px solid transparent;
    border-right: 3.5px solid transparent;
    border-top: 4px solid #333;
}

.dim .caret {
    border-top-color: #555;
}

.tb-sep {
    width: 1px;
    height: 34px;
    background: #ddd;
    margin: 0 4px;
    flex: none;
}

.sep-a {
    margin: 0 5px 0 5px;
}

.sep-b {
    margin: 0 4px 0 0;
}

.sep-c {
    margin: 0 6px;
}

.ico-letter {
    font-size: 10px;
    text-anchor: middle;
    fill: #333;
}

.sel {
    display: flex;
    align-items: center;
    justify-content: space-between;
    border: 1px solid #ddd;
    border-radius: 2px;
    background: #fff;
    padding: 0 7px;
    height: 24px;
}

.sel svg {
    width: 10px;
    height: 6px;
    flex: none;
}

.sel-normal {
    width: 91px;
    margin-left: 2px;
}

.sel-unit {
    width: 64px;
    margin: 0 4px 0 5px;
}

.sel-line {
    width: 91px;
    margin-left: 3px;
    font-size: 12.5px;
}

.tb-t {
    width: 36px;
}

.tb-grid {
    margin-left: 2px;
}

/* --- workspace --- */
.workspace {
    height: 684px;
    display: flex;
    position: relative;
    background: #fff;
}

.rail {
    width: 28px;
    flex: none;
    background: #f1f1f1;
    border-right: 1px solid #ddd;
    padding-top: 8px;
}

.pin {
    width: 12px;
    height: 14px;
    display: block;
}

.pin-rail {
    margin: 1px 0 14px 6px;
}

.rail-tab {
    writing-mode: vertical-rl;
    margin-left: 2px;
    width: 26px;
    display: flex;
    align-items: center;
    justify-content: center;
    background: #eee;
    border: 1px solid #ddd;
    border-right: none;
    color: #333;
}

.rail-tab.on {
    background: #fff;
    color: #5a82ea;
    margin-right: -1px;
    width: 27px;
    letter-spacing: 0.6px;
}

.rt-all {
    height: 86px;
}

.rt-design {
    height: 115px;
}

.rt-common {
    height: 118px;
}

.left-panel {
    width: 252px;
    flex: none;
}

.panel-tabs {
    display: flex;
    height: 31px;
    padding: 6px 0 0 5px;
    border-bottom: 1px solid #ddd;
    background: #fff;
}

.panel-tabs span {
    height: 25px;
    display: flex;
    align-items: center;
    justify-content: center;
    background: #eee;
    border: 1px solid #ddd;
    border-left: none;
}

.panel-tabs .on {
    background: #fff;
    color: #5a82ea;
    border-left: 1px solid #ddd;
    border-bottom-color: #fff;
}

.pt-page {
    width: 52px;
}

.pt-net {
    width: 45px;
}

.pt-comp {
    width: 86px;
}

.pt-obj {
    width: 57px;
}

.tree-search {
    display: flex;
    height: 26px;
    margin: 6px 20px 0 8px;
    border: 1px solid #ddd;
    border-radius: 2px;
}

.ts-cell {
    width: 26px;
    display: flex;
    align-items: center;
    justify-content: center;
    flex: none;
}

.ts-cell svg {
    width: 18px;
    height: 18px;
}

.ts-filter {
    background: #e5f0fa;
    border-right: 1px solid #ddd;
}

.ts-input {
    flex: 1;
    display: flex;
    align-items: center;
    justify-content: flex-end;
    padding-right: 5px;
}

.ts-input svg {
    width: 14px;
    height: 14px;
}

.tree {
    margin-top: 15px;
    font-family: 'Liberation Serif', serif;
    font-size: 13px;
    color: #333;
}

.tree li {
    height: 24px;
    display: flex;
    align-items: center;
}

.exp {
    width: 12px;
    height: 18px;
    flex: none;
}

.t-ico {
    width: 18px;
    height: 18px;
    flex: none;
}

.lv1 {
    padding-left: 5px;
    gap: 5px;
}

.lv2 {
    padding-left: 22px;
    gap: 6px;
}

.lv3 {
    padding-left: 39px;
    gap: 5px;
}

.lv4 {
    padding-left: 61px;
}

.lv4 .conn {
    margin-right: 4px;
}

.sheet-ico {
    width: 14px;
    height: 18px;
    margin-right: 7px;
}

.lv5 {
    padding-left: 45px;
}

.lv5 .conn {
    margin-right: 3px;
}

.lv5 .t-ico {
    margin-right: 3px;
}

.lv5.on {
    background: #e8f3fc;
    color: #5a82ea;
    margin-left: 3px;
    padding-left: 42px;
}

.conn {
    width: 10px;
    height: 20px;
    flex: none;
    border-left: 1px dashed #555;
    background: linear-gradient(#555, #555) 0 10px / 100% 1px no-repeat;
}

.split-v {
    width: 3px;
    flex: none;
    background: #e4e4e4 radial-gradient(#bbb 0.5px, transparent 0.6px) 0 0 / 3px 3px;
}

.split-r {
    width: 7px;
}

.center {
    width: 1617px;
    flex: none;
    display: flex;
    flex-direction: column;
}

.doc-tabs {
    height: 28px;
    display: flex;
    background: #ddd;
}

.doc-tab {
    display: flex;
    align-items: center;
    font-size: 13.5px;
    height: 100%;
    background: #eee;
    border-right: 1px solid #ddd;
}

.dt-start {
    width: 105px;
    padding-left: 9px;
    gap: 6px;
}

.dt-cloud {
    width: 20px;
    height: 17px;
    color: #6e7bf8;
}

.dt-sch {
    width: 176px;
    padding-left: 12px;
    gap: 9px;
    color: #444;
    font-size: 13px;
}

.dt-sheet {
    width: 14px;
    height: 20px;
}

.dt-pcb {
    width: 176px;
    padding-left: 11px;
    gap: 6px;
    background: #e3f0fb;
}

.dt-pcb-ico {
    width: 18px;
    height: 18px;
}

.dt-pcb em {
    color: #5a82ea;
}

.ruler-h {
    display: block;
    width: 1617px;
    height: 18px;
    background: #fff;
}

.ruler-num text {
    font-size: 12px;
    fill: #555;
}

.stage {
    flex: 1;
    display: flex;
    min-height: 0;
}

.ruler-v {
    width: 19px;
    height: 638px;
    flex: none;
    display: block;
    background: #fff;
}

.stage-main {
    width: 1598px;
    display: flex;
    flex-direction: column;
}

.board {
    width: 1598px;
    height: 621px;
    display: block;
    flex: none;
}

.b-purple {
    fill: none;
    stroke: #800080;
    stroke-width: 3;
}

.b-red {
    fill: none;
    stroke: #ee3a1c;
    stroke-width: 2;
}

.b-red.thin {
    stroke-width: 1.5;
}

.trace polyline {
    fill: none;
    stroke: #ee3a1c;
    stroke-width: 4;
}

.b-yellow,
.b-yellow * {
    fill: none;
    stroke: #f0d42a;
    stroke-width: 2.4;
}

.b-teal {
    fill: none;
    stroke: #2f5f55;
    stroke-width: 1.5;
}

.pad rect,
.pad circle {
    fill: #ee3a1c;
}

.pad-num text {
    fill: #fff;
    font-family: 'Liberation Serif', serif;
    font-size: 15px;
    text-anchor: middle;
}

.pad-num .big {
    font-size: 25px;
}

.x-mark {
    stroke: #f0d42a;
    stroke-width: 1.6;
    fill: none;
}

.drill * {
    fill: #0a0a0a;
}

.drill .gray {
    fill: #696969;
}

.silk {
    fill: #f0d42a;
    font-size: 11px;
    font-weight: bold;
}

.silk.sensor {
    font-size: 12.5px;
    letter-spacing: 0.4px;
}

.seeb {
    fill: #ee3a1c;
    font-family: 'DejaVu Sans', sans-serif;
    font-size: 42.3px;
}

.layer-tabs {
    height: 17px;
    background: #333;
    display: flex;
    color: #ddd;
    line-height: 17px;
    white-space: nowrap;
    overflow: hidden;
}

.lt-nav {
    width: 44px;
    margin-left: 2px;
    background: #444;
    border: 1px solid #555;
    display: flex;
    align-items: center;
    justify-content: center;
    gap: 12px;
}

.lt-nav .lt-l {
    width: 0;
    height: 0;
    border: 3.500px solid transparent;
    border-left: none;
    border-right: 4px solid #ccc;
}

.lt-nav .lt-r {
    width: 0;
    height: 0;
    border: 3.500px solid transparent;
    border-right: none;
    border-left: 4px solid #ccc;
}

.layer-tabs span {
    display: flex;
    align-items: center;
    gap: 5px;
    padding: 0 11px 0 8px;
    border-left: 1px solid #2a2a2a;
}

.layer-tabs span.on {
    background: #4a4a4a;
    color: #fff;
    font-weight: 500;
    padding-left: 6px;
}

.layer-tabs span i {
    width: 8px;
    height: 9px;
    border: 1px solid #ddd;
    flex: none;
}

.layer-tabs .s-top { background: #ee3a1c; border-color: #ee3a1c; }
.layer-tabs .s-bot { background: #3a10ff; }
.layer-tabs .s-tsilk { background: #f2d32c; border-color: #f2d32c; }
.layer-tabs .s-bsilk { background: #70c040; border-color: #70c040; }
.layer-tabs .s-tsold { background: #800080; }
.layer-tabs .s-bsold { background: #a010ff; }
.layer-tabs .s-tpaste { background: #8f8f8f; }
.layer-tabs .s-bpaste { background: #7a1400; }
.layer-tabs .s-tasm { background: #5cc09d; border-color: #5cc09d; }
.layer-tabs .s-basm { background: #6040ff; border-color: #6040ff; }
.layer-tabs .s-outline { background: #f010f0; border-color: #f010f0; }
.layer-tabs .s-multi { background: #bbb; border-color: #bbb; }
.layer-tabs .s-doc { background: #fff; }
.layer-tabs .s-mech { background: #e010e0; border-color: #e010e0; }

/* --- right panel --- */
.right-panel {
    width: 283px;
    flex: none;
    display: flex;
    flex-direction: column;
    background: #fff;
}

.rp-top {
    height: 36px;
    padding: 10px 0 0 11px;
    display: flex;
    align-items: flex-start;
}

.sel-preset {
    width: 147px;
    height: 26px;
    font-size: 13.5px;
    padding: 0 10px 0 5px;
}

.btn {
    border: 1px solid #ddd;
    border-radius: 2px;
    color: #5a82ea;
    padding: 0;
}

.reset {
    width: 57px;
    height: 24px;
    margin-left: 7px;
}

.stack-ico {
    width: 18px;
    height: 18px;
    margin: 4px 0 0 34px;
}

.rp-filter {
    height: 27px;
    display: flex;
    align-items: center;
    padding-left: 13px;
}

.rp-filter span {
    padding-right: 13px;
    margin-right: 13px;
    border-right: 1px solid #ddd;
    line-height: 17px;
}

.rp-filter span:last-child {
    border: none;
}

.rp-filter .on {
    color: #5a82ea;
}

.layers {
    flex: 1;
    min-height: 0;
    display: flex;
    overflow: hidden;
    position: relative;
}

.layers ul {
    width: 272px;
    flex: none;
}

.layers li {
    height: 26.350px;
    display: flex;
    align-items: center;
    position: relative;
    padding-left: 47px;
}

.layers li.grp {
    padding-left: 27px;
}

.layers li.cur {
    background: #f6ecd9;
}

.layers li span {
    margin-left: 8px;
}

.sw {
    position: absolute;
    left: 0;
    top: 0;
    width: 38px;
    height: 100%;
    display: flex;
    align-items: center;
    justify-content: center;
}

.sw svg {
    width: 18px;
    height: 18px;
}

.tri {
    position: absolute;
    left: 5px;
    top: 8px;
    width: 9px;
    height: 8px;
    background: #ddd;
    clip-path: polygon(100% 0, 100% 100%, 0 100%);
}

.c1 { background: #ee3a1c; }
.c3 { background: #f2d32c; }
.c5 { background: #800080; }
.c7 { background: #8f8f8f; }
.c9 { background: #5ccc9d; }
.c2 { background: #4a00ff; }
.c4 { background: #70d040; }
.c6 { background: #a000ff; }
.c8 { background: #7a1400; }
.c10 { background: #6a3aff; }
.c11 { background: #ff00ff; }
.c12 { background: #c0c0c0; }
.c13 { background: #fff; }
.c14 { background: #e810e8; }
.c56 { background: #33797a; }
.c57 { background: #7050ff; }
.c71 { background: #a050d8; }

.eye {
    width: 18px;
    height: 14px;
    flex: none;
}

.lk {
    width: 20px;
    height: 22px;
    position: absolute;
    left: 246px;
    top: 3px;
}

.layers-track {
    flex: 1;
    background: #f0f0f0;
    border-left: 1px solid #ddd;
    padding: 2px 0 0 5px;
}

.layers-track i {
    display: block;
    width: 5px;
    height: 329px;
    background: #bbb;
    border-radius: 3px;
}

.coords {
    height: 79px;
    background: #f2f2f2;
    border-top: 1px solid #ddd;
    flex: none;
    margin-right: -33px;
    position: relative;
    z-index: 1;
}

.coords div {
    height: 26px;
    display: grid;
    grid-template-columns: 34px 112px 34px auto;
    align-items: center;
    border-bottom: 1px solid #ddd;
    padding-left: 4px;
    font-size: 13px;
    color: #444;
}

.coords b {
    font-weight: normal;
    text-align: right;
    padding-right: 6px;
}

.coords span {
    padding-left: 6px;
}

.coords div span:first-of-type {
    padding-left: 2px;
}

.rail-r {
    width: 33px;
    flex: none;
    background: #f1f1f1;
    border-left: 1px solid #ddd;
}

.pin-rail-r {
    margin: 9px 0 16px 10px;
}

.rr-tab {
    writing-mode: vertical-rl;
    width: 26px;
    height: 78px;
    display: flex;
    justify-content: center;
    align-items: center;
    border: 1px solid #ddd;
    border-left: none;
    background: #eee;
}

.rr-tab.on {
    background: #fff;
    color: #5a82ea;
    margin-left: -1px;
    width: 27px;
}

.grip {
    position: absolute;
    width: 5px;
    height: 55px;
    top: 315px;
    background: #fff;
    border: 1px solid #999;
}

.grip-l {
    left: 278px;
}

.grip-r {
    left: 1902px;
}

/* --- lower panel --- */
.split-h {
    height: 6px;
    background: #e4e4e4 radial-gradient(#bbb 0.5px, transparent 0.6px) 0 0 / 3px 3px;
    position: relative;
}

.grip-h {
    position: absolute;
    left: 1082px;
    top: 0;
    width: 56px;
    height: 5px;
    background: #fff;
    border: 1px solid #999;
    border-top: none;
}

.lower {
    height: 354px;
    display: flex;
}

.lib {
    width: 1912px;
    flex: none;
    display: flex;
    flex-direction: column;
}

.lib-top {
    height: 32px;
    padding-top: 6px;
    display: flex;
    align-items: flex-start;
    position: relative;
}

.lib-tabs {
    width: 411px;
    flex: none;
    height: 26px;
    display: flex;
    align-items: center;
    padding-left: 10px;
}

.lib-tabs span {
    line-height: 18px;
}

.lib-tabs .on {
    color: #5a82ea;
}

.lt-device {
    padding-right: 14px;
    border-right: 1px solid #ddd;
}

.lt-foot {
    margin-left: 14px;
    padding-right: 13px;
    border-right: 1px solid #ddd;
}

.lt-reuse {
    margin-left: 14px;
    padding-right: 13px;
    border-right: 1px solid #ddd;
}

.lt-3d {
    margin-left: 14px;
    padding-right: 13px;
    border-right: 1px solid #ddd;
}

.lt-panel {
    margin-left: 13px;
}

.src-group {
    width: 586px;
    height: 26px;
    flex: none;
    display: flex;
    border: 1px solid #ddd;
    border-radius: 2px;
}

.src-group>span {
    display: flex;
    align-items: center;
}

.src-lcsc {
    width: 123px;
    justify-content: center;
    border-right: 1px solid #ddd;
}

.src-eda {
    width: 78px;
    justify-content: center;
    background: #e3f0fb;
    color: #5a82ea;
    border-right: 1px solid #ddd;
}

.src-search {
    flex: 1;
    justify-content: space-between;
    padding: 0 7px 0 11px;
    font-family: 'Liberation Serif', serif;
    color: #777;
    font-size: 12.5px;
}

.src-search svg {
    width: 15px;
    height: 15px;
}

.req-link {
    margin: 5px 0 0 10px;
    color: #4f7cf0;
}

.lib-actions {
    position: absolute;
    right: 1px;
    top: 6px;
    display: flex;
    gap: 9px;
}

.lib-actions .btn {
    height: 26px;
}

.act-refresh {
    width: 70px;
}

.act-add {
    width: 47px;
}

.act-report {
    width: 96px;
    color: #aaa;
}

.act-batch {
    width: 109px;
}

.act-popup {
    width: 113px;
}

.lib-body {
    height: 295px;
    flex: none;
    display: flex;
    overflow: hidden;
}

.filter-input {
    height: 25px;
    border: 1px solid #ddd;
    border-radius: 2px;
    display: flex;
    align-items: center;
    justify-content: space-between;
    padding: 0 5px 0 11px;
    font-family: 'Liberation Serif', serif;
    color: #888;
}

.filter-input svg {
    width: 15px;
    height: 15px;
}

.lib-source {
    width: 130px;
    flex: none;
    padding: 6px 4px 0 6px;
    border-right: 1px solid #ddd;
}

.lib-source ul {
    margin-top: 6px;
}

.lib-source li {
    height: 26.500px;
    line-height: 26.500px;
    padding-left: 4px;
}

.lib-source li.on {
    background: #e9f3fc;
    color: #5a82ea;
}

.lib-cats {
    width: 263px;
    margin-left: 6px;
    flex: none;
    padding-top: 6px;
    position: relative;
}

.cat-all {
    height: 28px;
    margin: 5px 7px 0 0;
    line-height: 24px;
    padding-left: 3px;
    background: #e9f3fc;
    color: #5a82ea;
}

.lib-cats ul {
    height: 221px;
    overflow: hidden;
}

.lib-cats li {
    height: 28.700px;
    display: flex;
    align-items: center;
    gap: 6px;
    padding-left: 2px;
}

.lib-cats li svg {
    width: 15px;
    height: 15px;
    flex: none;
}

.cat-thumb {
    position: absolute;
    left: 255px;
    top: 38px;
    width: 5px;
    height: 40px;
    background: #bbb;
    border-radius: 3px;
}

.lib-table {
    margin-left: 5px;
    width: 1505px;
    flex: none;
    padding-top: 6px;
}

.type-row {
    height: 25px;
    display: flex;
    align-items: center;
    padding-left: 5px;
    gap: 14px;
}

.sel-type {
    width: 168px;
    height: 25px;
    padding: 0 8px 0 9px;
}

.table-wrap {
    position: relative;
    margin-top: 5px;
    height: 249px;
    overflow: hidden;
}

table {
    width: 1505px;
    table-layout: fixed;
    border-collapse: collapse;
    color: #444;
}

col {
    width: 132px;
}

.c-n {
    width: 55px;
}

.c-a {
    width: 131px;
}

th {
    height: 26px;
    padding: 0 0 0 7px;
    background: #f2f2f2;
    border: 1px solid #e2e2e2;
    font-weight: normal;
    text-align: left;
    position: relative;
    white-space: nowrap;
}

th svg {
    position: absolute;
    right: 11px;
    top: 4px;
    width: 12px;
    height: 18px;
}

td {
    height: 27.350px;
    padding: 0 0 0 7px;
    border: 1px solid #e2e2e2;
    white-space: nowrap;
    overflow: hidden;
}

tbody tr:nth-child(even) td {
    background: #f1f1f1;
}

.table-track {
    position: absolute;
    right: 0;
    top: 27px;
    bottom: 0;
    width: 10px;
    background: #fff;
}

.table-track i {
    display: block;
    width: 5px;
    height: 30px;
    margin: 3px 0 0 1px;
    background: #bbb;
    border-radius: 3px;
}

.lib-foot {
    height: 27px;
    background: #f2f2f2;
    border-top: 1px solid #ddd;
    display: flex;
    align-items: center;
    position: relative;
}

.pin-foot {
    margin: 0 16px 0 7px;
    width: 11px;
    flex: none;
}

.ft {
    height: 100%;
    display: flex;
    align-items: center;
    justify-content: center;
    border-right: 1px solid #ddd;
}

.ft-lib {
    width: 79px;
    background: #fff;
    color: #5a82ea;
    border-left: 1px solid #ddd;
}

.ft-log {
    width: 78px;
    gap: 5px;
}

.ft-log i {
    width: 13px;
    height: 13px;
    border-radius: 50%;
    background: #ee3a2c;
}

.ft-std {
    width: 154px;
}

.ft-drc {
    width: 78px;
}

.ft-find {
    width: 85px;
}

.foot-thumb {
    width: 40px;
    height: 8px;
    border-radius: 4px;
    background: #888;
    margin-left: 17px;
}

.pager {
    margin-left: auto;
    display: flex;
    align-items: center;
    padding-right: 9px;
    color: #555;
}

.pg {
    width: 20px;
    height: 21px;
    border: 1px solid #ddd;
    background: #fff;
    display: flex;
    align-items: center;
    justify-content: center;
    margin-right: 5px;
}

.pg svg {
    width: 12px;
    height: 16px;
}

.pg.cur {
    width: 33px;
    background: #ccc;
}

.total {
    margin: 0 6px;
    font-size: 13.5px;
}

.per {
    width: 77px;
    height: 24px;
    display: flex;
    align-items: center;
    justify-content: center;
    gap: 4px;
    font-size: 12.5px;
    border: 1px solid #e4e4e4;
}

.per svg {
    width: 9px;
    height: 6px;
}

.lower-split {
    width: 8px;
    flex: none;
    background: #e4e4e4 radial-gradient(#bbb 0.5px, transparent 0.6px) 0 0 / 3px 3px;
    position: relative;
}

.lower-split i {
    position: absolute;
    left: 0;
    top: 152px;
    width: 5px;
    height: 56px;
    background: #fff;
    border: 1px solid #999;
}

.preview {
    flex: 1;
    padding: 7px 5px 0 4px;
    display: flex;
    flex-direction: column;
}

.pv-top {
    display: flex;
    height: 27px;
    gap: 5px;
}

.place {
    width: 167px;
    margin-right: 2px;
    border: none;
    border-radius: 2px;
    background: #ccc;
    color: #fff;
}

.btn.pv {
    width: 26px;
    border-color: #5a82ea;
    font-size: 14px;
}

.pv-grid {
    margin-top: 5px;
    height: 284px;
    display: grid;
    grid-template-columns: 1fr 1fr;
    grid-template-rows: 1fr 1fr;
    gap: 3px;
}

.pv-grid i {
    background: #e0e0e0;
}

.sel-pv {
    margin-top: 5px;
    height: 26px;
    border-radius: 2px;
}
```
